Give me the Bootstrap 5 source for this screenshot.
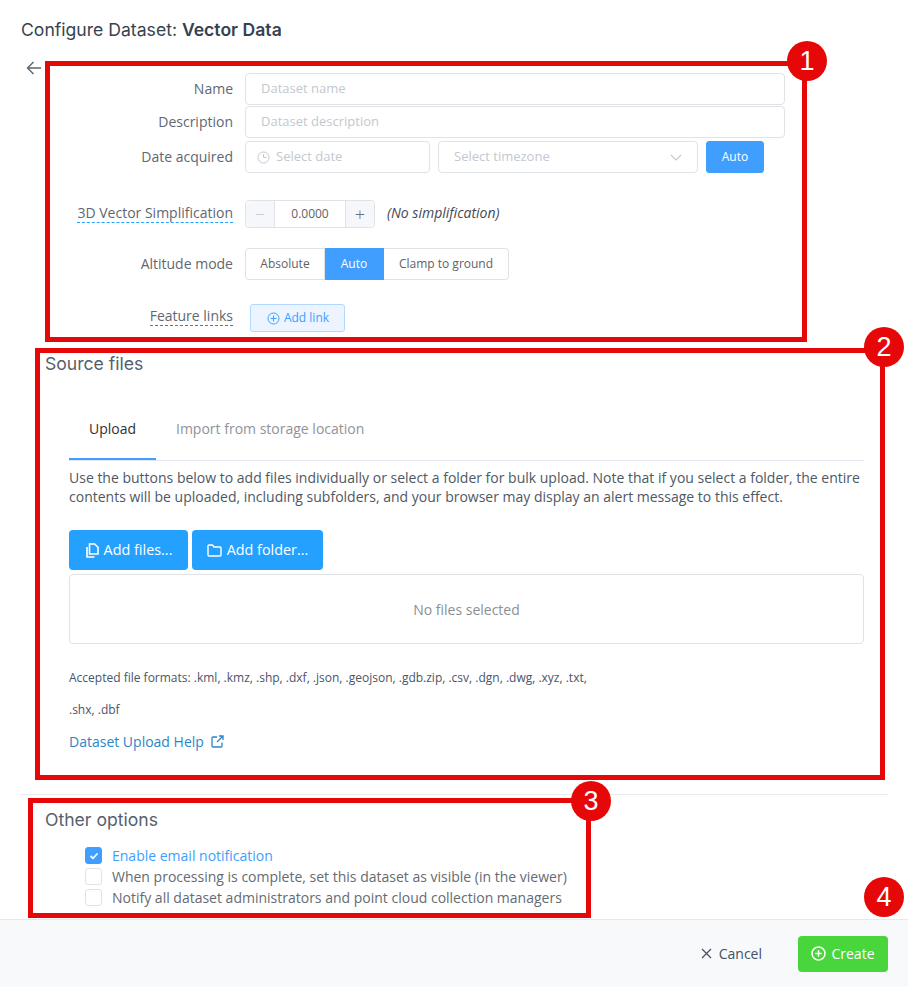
<!DOCTYPE html>
<html lang="en">
<head>
    <meta charset="UTF-8">
    <meta name="viewport" content="width=device-width, initial-scale=1">
    <title>Configure Dataset</title>
    <link href="https://cdn.jsdelivr.net/npm/bootstrap@5.3.0/dist/css/bootstrap.min.css" rel="stylesheet">
    <style>
        html, body { height: 100%; }
        body { font-family: "Open Sans", sans-serif; font-size: 14px; color: #4a5568; background: #fff; }
        .page-wrap { position: relative; width: 908px; height: 987px; overflow: hidden; }
        .page-title { font-family: Inter, Roboto, sans-serif; font-size: 17.6px; font-weight: 400; color: #36424f; margin: 0; padding: 19px 0 0 21px; line-height: 21px; height: 61px; }
        .page-title b { font-weight: 600; }
        .back-arrow { position: absolute; left: 26px; top: 60px; color: #5c6670; }

        .form-block { padding: 12px 0 0 0; }
        .form-line { display: flex; align-items: center; }
        .line-desc { margin-top: 1px; }
        .line-date { margin-top: 3px; }
        .line-simp { margin-top: 27px; }
        .line-alt { margin-top: 20px; }
        .line-links { margin-top: 24px; }
        .form-lbl { width: 233px; text-align: right; flex: none; margin-right: 12px; color: #5f6770; line-height: 19px; padding-bottom: 2px; }
        .form-lbl.up-4 { padding-bottom: 4px; }
        .form-lbl.up-6 { padding-bottom: 6px; }
        .hint-lbl { border-bottom: 1px dashed #24a0ff; }
        .hint-lbl.grey { border-bottom-color: #6b7280; }
        .fld { height: 32px; border: 1px solid #dfe3e8; border-radius: 4px; font-size: 13px; color: #c3c8cf; padding: 0 15px; display: flex; align-items: center; background: #fff; }
        .fld-wide { width: 540px; }
        .fld-date { width: 185px; padding-left: 11px; gap: 6px; }
        .fld-zone { width: 260px; margin-left: 8px; }
        .btn-auto { background: #409eff; border: 1px solid #409eff; color: #fff; font-size: 12px; padding: 0; width: 58px; height: 32px; border-radius: 3px; }
        .num-box { display: flex; width: 130px; height: 28px; border: 1px solid #dfe3e8; border-radius: 4px; font-size: 12px; }
        .num-step { width: 28px; background: #f5f7fa; display: flex; align-items: center; justify-content: center; color: #c3c8cf; flex: none; font-size: 18px; font-weight: 300; }
        .num-step.on { color: #666d75; }
        .num-val { flex: 1; border-left: 1px solid #dfe3e8; border-right: 1px solid #dfe3e8; display: flex; align-items: center; justify-content: center; color: #606266; }
        .no-simp { margin-left: 12px; font-style: italic; font-size: 14px; color: #3f4a56; padding-bottom: 4px; }
        .radio-set { display: flex; height: 32px; font-size: 12px; color: #606266; }
        .radio-set span { display: flex; align-items: center; justify-content: center; border: 1px solid #dfe3e8; border-left: 0; }
        .radio-set span:first-child { width: 80px; border-left: 1px solid #dfe3e8; border-radius: 4px 0 0 4px; }
        .radio-set span:nth-child(2) { width: 59px; background: #409eff; border-color: #409eff; color: #fff; }
        .radio-set span:last-child { width: 125px; border-radius: 0 4px 4px 0; }
        .btn-addlink { margin-left: 5px; width: 95px; height: 28px; background: #ecf5ff; border: 1px solid #b3d8ff; color: #409eff; font-size: 12px; border-radius: 3px; padding: 0 0 0 1px; display: flex; align-items: center; justify-content: center; gap: 4px; }

        .sect-head { font-family: Inter, Roboto, sans-serif; font-size: 17.6px; font-weight: 400; color: #56606c; line-height: 21px; margin: 0; padding-left: 45px; }
        .head-source { margin-top: 21px; }
        .head-other { margin-top: 14px; }
        .tab-bar { margin: 30px 44px 0 69px; display: flex; height: 57px; border-bottom: 1px solid #e4e7ed; font-size: 14px; }
        .tab-item { display: flex; align-items: center; height: 56px; padding-bottom: 6px; border-bottom: 2px solid transparent; }
        .tab-item.on { width: 87px; justify-content: center; color: #303133; border-bottom-color: #409eff; }
        .tab-item.off { color: #909399; margin-left: 20px; }
        .upload-note { margin: 7px 44px 0 69px; line-height: 19px; color: #4e5864; }
        .upl-row { margin: 24px 0 0 69px; gap: 4px; }
        .btn-upl { background: #24a0ff; border: 0; color: #fff; height: 40px; font-size: 14.4px; border-radius: 4px; display: flex; align-items: center; justify-content: center; gap: 5px; padding: 0; }
        .btn-files { width: 119px; }
        .btn-folder { width: 131px; }
        .drop-area { margin: 4px 44px 0 69px; height: 70px; border: 1px solid #dfe3e8; border-radius: 4px; display: flex; align-items: center; justify-content: center; color: #8a8f96; font-size: 14px; }
        .formats { margin: 26px 0 0 69px; font-size: 12px; line-height: 16px; color: #4a5568; }
        .formats.next { margin-top: 16px; }
        .help-link { margin: 14px 0 0 69px; color: #2a86c8; text-decoration: none; font-size: 14px; display: inline-flex; align-items: center; gap: 7px; line-height: 19px; }
        .rule-line { margin: 42px 20px 0; border-top: 1px solid #e8eaee; height: 0; }

        .opt-list { margin-top: 15px; }
        .opt-line { display: flex; align-items: center; height: 21px; padding-left: 85px; color: #646b73; }
        .opt-box { width: 17px; height: 17px; border: 1px solid #dfe3e8; border-radius: 3px; margin-right: 10px; flex: none; display: flex; align-items: center; justify-content: center; }
        .opt-box.on { background: #409eff; border-color: #409eff; }
        .opt-line.on { color: #409eff; }

        .foot-bar { position: absolute; left: 0; right: 0; bottom: 0; height: 68px; background: #f8f9fb; border-top: 1px solid #e6e8ec; display: flex; align-items: center; justify-content: flex-end; padding: 0 20px 0 0; }
        .btn-cancel { background: none; border: 0; color: #45505e; font-size: 14px; padding: 0; display: flex; align-items: center; gap: 7px; margin-right: 36px; }
        .btn-create { background: #48d63c; border: 0; color: #fff; width: 90px; height: 36px; font-size: 14px; border-radius: 4px; display: flex; align-items: center; justify-content: center; gap: 5px; padding: 0; }

        .note-box { position: absolute; border: 5px solid #e60808; pointer-events: none; }
        .box-one { left: 45px; top: 61px; width: 762px; height: 281px; }
        .box-two { left: 35px; top: 348px; width: 850px; height: 432px; }
        .box-three { left: 28px; top: 798px; width: 563px; height: 120px; }
        .note-num { position: absolute; width: 40px; height: 40px; border-radius: 50%; background: #e60808; color: #fff; font-family: "Liberation Sans", sans-serif; font-size: 27px; line-height: 40px; text-align: center; }
        .num-one { left: 787px; top: 41px; }
        .num-two { left: 864px; top: 327px; }
        .num-three { left: 571px; top: 781px; }
        .num-four { left: 864px; top: 877px; }
    </style>
</head>
<body>

<div class="page-wrap">
    <h1 class="page-title">Configure Dataset: <b>Vector Data</b></h1>

    <svg class="back-arrow" width="16" height="16" viewBox="0 0 16 16" fill="none" stroke="currentColor" stroke-width="1.4"><path d="M15 8H1.5M7.5 2 1.5 8l6 6"/></svg>

    <!-- General settings -->
    <div class="form-block">
        <div class="form-line">
            <span class="form-lbl">Name</span>
            <div class="fld fld-wide">Dataset name</div>
        </div>
        <div class="form-line line-desc">
            <span class="form-lbl">Description</span>
            <div class="fld fld-wide">Dataset description</div>
        </div>
        <div class="form-line line-date">
            <span class="form-lbl">Date acquired</span>
            <div class="fld fld-date">
                <svg width="13" height="13" viewBox="0 0 13 13" fill="none" stroke="#c3c8cf" stroke-width="1"><circle cx="6.5" cy="6.5" r="5.5"/><path d="M6.5 3v3.5h3"/></svg>
                Select date
            </div>
            <div class="fld fld-zone justify-content-between">
                Select timezone
                <svg width="12" height="7" viewBox="0 0 12 7" fill="none" stroke="#c3c8cf" stroke-width="1.1"><path d="M1 1l5 5 5-5"/></svg>
            </div>
            <button class="btn btn-auto ms-2" type="button">Auto</button>
        </div>
        <div class="form-line line-simp">
            <span class="form-lbl up-4"><span class="hint-lbl">3D Vector Simplification</span></span>
            <div class="num-box">
                <div class="num-step rounded-start">&minus;</div>
                <div class="num-val">0.0000</div>
                <div class="num-step on rounded-end">+</div>
            </div>
            <span class="no-simp">(No simplification)</span>
        </div>
        <div class="form-line line-alt">
            <span class="form-lbl">Altitude mode</span>
            <div class="radio-set">
                <span>Absolute</span>
                <span>Auto</span>
                <span>Clamp to ground</span>
            </div>
        </div>
        <div class="form-line line-links">
            <span class="form-lbl up-6"><span class="hint-lbl grey">Feature links</span></span>
            <button class="btn btn-addlink" type="button">
                <svg width="13" height="13" viewBox="0 0 13 13" fill="none" stroke="currentColor" stroke-width="1"><circle cx="6.5" cy="6.5" r="5.5"/><path d="M6.5 3.5v6M3.5 6.5h6"/></svg>
                Add link
            </button>
        </div>
    </div>

    <!-- Source files -->
    <h2 class="sect-head head-source">Source files</h2>
    <div class="tab-bar">
        <div class="tab-item on">Upload</div>
        <div class="tab-item off">Import from storage location</div>
    </div>
    <p class="upload-note">Use the buttons below to add files individually or select a folder for bulk upload. Note that if you select a folder, the entire contents will be uploaded, including subfolders, and your browser may display an alert message to this effect.</p>
    <div class="d-flex upl-row">
        <button class="btn btn-upl btn-files" type="button">
            <svg width="14" height="15" viewBox="0 0 14 15" fill="none" stroke="#fff" stroke-width="1.6"><path d="M4.5 1h5.2L13 4.3V11H4.5zM2 4v10h7.5"/></svg>
            Add files...
        </button>
        <button class="btn btn-upl btn-folder" type="button">
            <svg width="15" height="13" viewBox="0 0 15 13" fill="none" stroke="#fff" stroke-width="1.4"><path d="M1 2.2c0-.7.4-1.2 1-1.2h3.5l1.5 2h6c.6 0 1 .4 1 1v6.8c0 .7-.4 1.2-1 1.2H2c-.6 0-1-.5-1-1.2z"/></svg>
            Add folder...
        </button>
    </div>
    <div class="drop-area">No files selected</div>
    <p class="formats">Accepted file formats: .kml, .kmz, .shp, .dxf, .json, .geojson, .gdb.zip, .csv, .dgn, .dwg, .xyz, .txt,</p>
    <p class="formats next">.shx, .dbf</p>
    <a class="help-link" href="#">
        Dataset Upload Help
        <svg width="13" height="13" viewBox="0 0 13 13" fill="none" stroke="currentColor" stroke-width="1.3"><path d="M6 2H2a1 1 0 0 0-1 1v8a1 1 0 0 0 1 1h8a1 1 0 0 0 1-1V7.5M8 1h4v4M12 1 6 7"/></svg>
    </a>

    <div class="rule-line"></div>

    <!-- Other options -->
    <h2 class="sect-head head-other">Other options</h2>
    <div class="opt-list">
        <div class="opt-line on">
            <span class="opt-box on"><svg width="10" height="8" viewBox="0 0 10 8" fill="none" stroke="#fff" stroke-width="1.8"><path d="M1.5 4 4 6.3 8.5 1.5"/></svg></span>
            Enable email notification
        </div>
        <div class="opt-line"><span class="opt-box"></span>When processing is complete, set this dataset as visible (in the viewer)</div>
        <div class="opt-line"><span class="opt-box"></span>Notify all dataset administrators and point cloud collection managers</div>
    </div>

    <div class="foot-bar">
        <button class="btn btn-cancel" type="button">
            <svg width="11" height="11" viewBox="0 0 11 11" fill="none" stroke="currentColor" stroke-width="1.2"><path d="M1 1l9 9M10 1l-9 9"/></svg>
            Cancel
        </button>
        <button class="btn btn-create" type="button">
            <svg width="15" height="15" viewBox="0 0 15 15" fill="none" stroke="#fff" stroke-width="1.5"><circle cx="7.5" cy="7.5" r="6.5"/><path d="M7.5 4.2v6.6M4.2 7.5h6.6"/></svg>
            Create
        </button>
    </div>

    <!-- Annotations over the screenshot -->
    <div class="note-box box-one"></div>
    <div class="note-box box-two"></div>
    <div class="note-box box-three"></div>
    <div class="note-num num-one">1</div>
    <div class="note-num num-two">2</div>
    <div class="note-num num-three">3</div>
    <div class="note-num num-four">4</div>
</div>

<script src="https://cdn.jsdelivr.net/npm/bootstrap@5.3.0/dist/js/bootstrap.bundle.min.js"></script>
</body>
</html>
